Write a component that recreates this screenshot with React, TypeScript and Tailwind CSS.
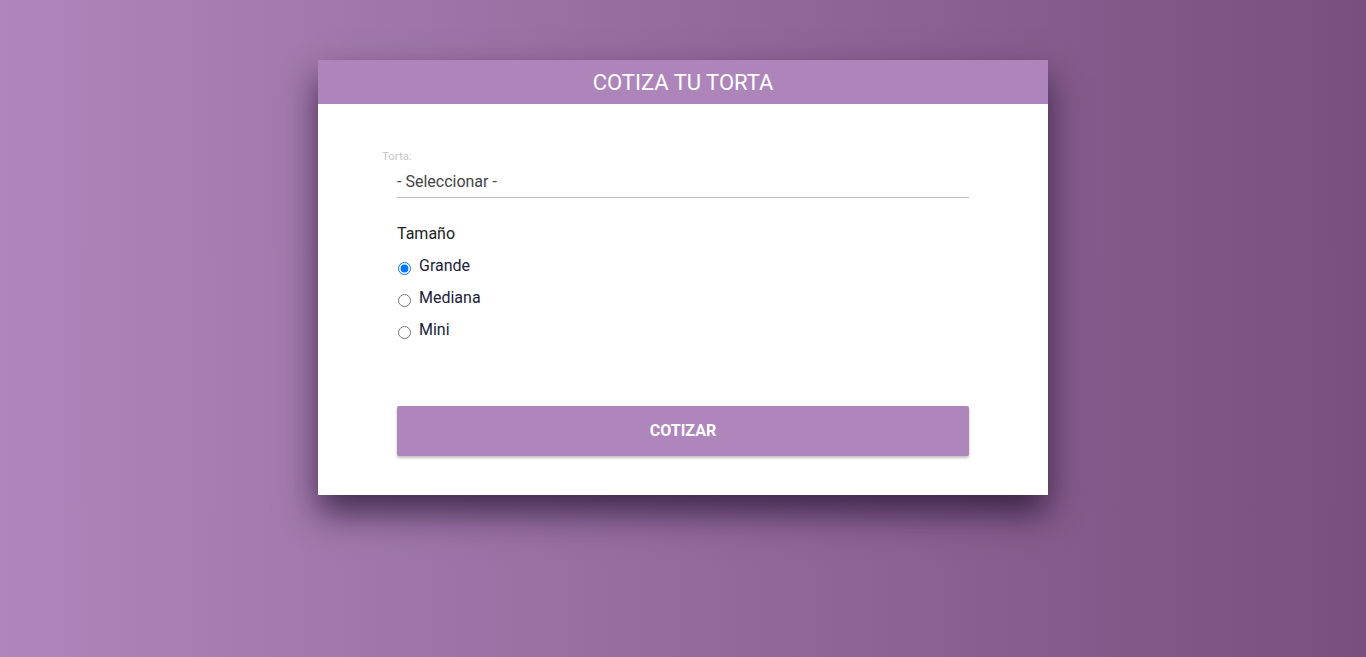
import { useState } from "react";

const sizes = ["Grande", "Mediana", "Mini"];

export default function App() {
	const [size, setSize] = useState("Grande");

	return (
		<div
			className="min-h-[657px] w-full bg-gradient-to-r from-[#ae86bb] to-[#78507f] pt-[60px]"
			style={{ fontFamily: "Roboto, 'Liberation Sans', sans-serif" }}
		>
			<div className="mx-auto w-[730px] bg-white shadow-[0_18px_32px_rgba(30,10,40,0.7)]">
				<div className="flex h-[44px] items-center justify-center bg-[#ad85ba] text-[22px] text-white">
					COTIZA TU TORTA
				</div>
				<div className="px-[79px] pt-[45px] pb-[39px]">
					<div className="-ml-[15px] text-[11.5px] leading-[14px] text-[#c8c8c8]">Torta:</div>
					<div className="mt-[7px] flex h-[28px] items-center border-b border-[#bdbdbd] pb-[4px] text-[16px] text-[#444]">
						- Seleccionar -
					</div>
					<div className="mt-[26px] text-[16px] leading-[20px] text-[#222]">Tamaño</div>
					<div className="mt-[6px] flex flex-col">
						{sizes.map((s) => (
							<label key={s} className="flex h-[32px] items-center gap-[8px] text-[16px] text-[#1c1c3a]">
								<input
									type="radio"
									name="size"
									checked={size === s}
									onChange={() => setSize(s)}
									className="ml-[1px] mt-[5px] h-[13px] w-[13px]"
								/>
								<span>{s}</span>
							</label>
						))}
					</div>
					<button className="mt-[60px] flex h-[50px] w-full items-center justify-center rounded-[2px] bg-[#ae86bb] text-[16px] font-bold text-white shadow-[0_2px_3px_rgba(0,0,0,0.25)]">
						COTIZAR
					</button>
				</div>
			</div>
		</div>
	);
}
